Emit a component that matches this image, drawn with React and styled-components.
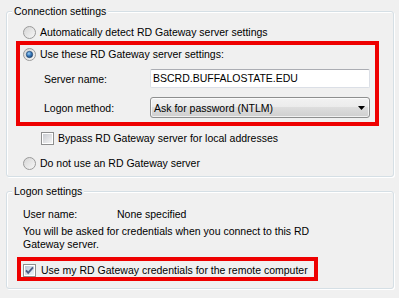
import React, { useId } from 'react';
import styled, { createGlobalStyle } from 'styled-components';

const GlobalStyle = createGlobalStyle`
  html, body {
    margin: 0;
    padding: 0;
    background: #f0f0f0;
  }
  body {
    font-family: "Liberation Sans", Arial, sans-serif;
    font-size: 10.5px;
    color: #000;
  }
`;

const Page = styled.div`
  width: 399px;
  height: 298px;
  box-sizing: border-box;
  padding: 11px 5px 0 6px;
  display: flex;
  flex-direction: column;
  gap: 14px;
`;

const Group = styled.div`
  box-sizing: border-box;
  height: ${(p) => p.$height}px;
  border: 1px solid #d5dfe5;
  border-radius: 3px;
  box-shadow: inset 1px 1px 0 #fff, 1px 1px 0 #fff;
  padding: 0 0 0 16px;
  display: flex;
  flex-direction: column;
  align-items: flex-start;
`;

const Legend = styled.div`
  margin: -7px 0 0 -11px;
  padding: 0 2px;
  height: 12px;
  line-height: 12px;
  background: #f0f0f0;
  white-space: nowrap;
`;

const Highlight = styled.div`
  box-sizing: border-box;
  width: ${(p) => p.$width}px;
  margin: ${(p) => p.$top}px 0 0 ${(p) => p.$left}px;
  border: 4px solid #ee0000;
  padding: ${(p) => p.$pad};
  display: flex;
  flex-direction: column;
  align-items: flex-start;
`;

const OptionRow = styled.label`
  display: flex;
  align-items: center;
  gap: ${(p) => p.$gap || 4}px;
  height: 14px;
  line-height: 14px;
  white-space: nowrap;
  margin-top: ${(p) => p.$top || 0}px;
  margin-left: ${(p) => p.$indent || 0}px;
  svg {
    flex: none;
  }
`;

const FieldRow = styled.div`
  display: flex;
  align-items: center;
  margin-top: ${(p) => p.$top}px;
  padding-left: 21px;
`;

const FieldLabel = styled.span`
  width: ${(p) => p.$width}px;
  flex: none;
  white-space: nowrap;
`;

const TextBox = styled.div`
  box-sizing: border-box;
  width: 220px;
  height: 19px;
  background: #fff;
  border: 1px solid #dbdfe6;
  border-top-color: #abadb3;
  border-radius: 2px;
  padding-left: 2px;
  line-height: 17px;
  white-space: nowrap;
`;

const Select = styled.div`
  box-sizing: border-box;
  width: 220px;
  height: 21px;
  border: 1px solid #8e8f8f;
  border-radius: 3px;
  background: linear-gradient(#f2f2f2 0%, #ebebeb 50%, #dddddd 50%, #cfcfcf 100%);
  box-shadow: inset 0 0 0 1px rgba(255, 255, 255, 0.7);
  display: flex;
  align-items: center;
  justify-content: space-between;
  padding: 0 4px 0 3px;
  white-space: nowrap;
`;

const InfoRow = styled.div`
  display: flex;
  height: 14px;
  line-height: 14px;
  margin-top: ${(p) => p.$top}px;
`;

const Paragraph = styled.p`
  margin: 4px 0 0;
  width: 300px;
  line-height: 13px;
`;

const Radio = ({ checked }) => {
  const id = useId().replace(/:/g, '');
  return (
    <svg width="13" height="13" viewBox="0 0 13 13">
      <defs>
        <linearGradient id={`rf${id}`} x1="0" y1="0" x2="1" y2="1">
          <stop offset="0" stopColor="#d4d4d4" />
          <stop offset="1" stopColor="#f8f8f8" />
        </linearGradient>
        <radialGradient id={`rd${id}`} cx="0.4" cy="0.35" r="0.75">
          <stop offset="0" stopColor="#9fd0f5" />
          <stop offset="0.45" stopColor="#3a7dc0" />
          <stop offset="1" stopColor="#163a68" />
        </radialGradient>
      </defs>
      <circle cx="6.5" cy="6.5" r="6" fill={`url(#rf${id})`} stroke="#9a9a9a" />
      {checked && <circle cx="6.5" cy="6.5" r="3.2" fill={`url(#rd${id})`} stroke="#1b3f6a" strokeWidth="0.6" />}
    </svg>
  );
};

const Checkbox = ({ checked }) => {
  const id = useId().replace(/:/g, '');
  return (
    <svg width="13" height="13" viewBox="0 0 13 13">
      <defs>
        <linearGradient id={`cf${id}`} x1="0" y1="0" x2="1" y2="1">
          <stop offset="0" stopColor={checked ? '#b9c6d6' : '#c9ccd1'} />
          <stop offset="1" stopColor={checked ? '#eef3f9' : '#f4f4f4'} />
        </linearGradient>
      </defs>
      <rect x="0.5" y="0.5" width="12" height="12" fill="#fff" stroke="#8e8f8f" />
      <rect x="2" y="2" width="9" height="9" fill={`url(#cf${id})`} />
      {checked && (
        <path d="M3 6.3 L5.2 8.8 L10 3.4" fill="none" stroke="#4a5c86" strokeWidth="1.9" />
      )}
    </svg>
  );
};

const Arrow = () => (
  <svg width="7" height="4" viewBox="0 0 7 4">
    <polygon points="0,0 7,0 3.5,4" fill="#000" />
  </svg>
);

export default function App() {
  return (
    <>
      <GlobalStyle />
      <Page>
        <Group $height={166}>
          <Legend>Connection settings</Legend>
          <OptionRow $top={8}>
            <Radio />
            Automatically detect RD Gateway server settings
          </OptionRow>
          <Highlight $width={363} $top={2} $left={-7} $pad="2px 0 4px 3px">
            <OptionRow>
              <Radio checked />
              Use these RD Gateway server settings:
            </OptionRow>
            <FieldRow $top={8}>
              <FieldLabel $width={106}>Server name:</FieldLabel>
              <TextBox>BSCRD.BUFFALOSTATE.EDU</TextBox>
            </FieldRow>
            <FieldRow $top={9}>
              <FieldLabel $width={106}>Logon method:</FieldLabel>
              <Select>
                Ask for password (NTLM)
                <Arrow />
              </Select>
            </FieldRow>
          </Highlight>
          <OptionRow $top={5} $indent={18}>
            <Checkbox />
            Bypass RD Gateway server for local addresses
          </OptionRow>
          <OptionRow $top={11}>
            <Radio />
            Do not use an RD Gateway server
          </OptionRow>
        </Group>

        <Group $height={98}>
          <Legend>Logon settings</Legend>
          <InfoRow $top={10}>
            <FieldLabel $width={94}>User name:</FieldLabel>
            None specified
          </InfoRow>
          <Paragraph>
            You will be asked for credentials when you connect to this RD Gateway server.
          </Paragraph>
          <Highlight $width={301} $top={6} $left={-6} $pad="2px 0 0 2px">
            <OptionRow $gap={5}>
              <Checkbox checked />
              Use my RD Gateway credentials for the remote computer
            </OptionRow>
          </Highlight>
        </Group>
      </Page>
    </>
  );
}
